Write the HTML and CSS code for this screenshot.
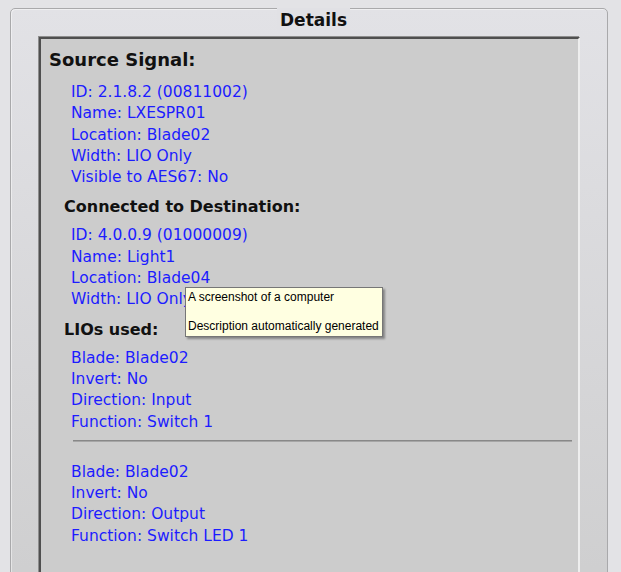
FILE: index.html
```html
<!DOCTYPE html>
<html lang="en">
<head>
  <meta charset="UTF-8">
  <meta name="viewport" content="width=device-width, initial-scale=1.0">
  <title>Details</title>
  <link rel="stylesheet" href="styles.css">
</head>
<body>
  <!-- Details group box -->
  <div class="group">
    <div class="group-title">Details</div>

    <div class="panel">
      <h2 class="heading">Source Signal:</h2>
      <ul class="props first">
        <li>ID: 2.1.8.2 (00811002)</li>
        <li>Name: LXESPR01</li>
        <li>Location: Blade02</li>
        <li>Width: LIO Only</li>
        <li>Visible to AES67: No</li>
      </ul>

      <h3 class="subheading">Connected to Destination:</h3>
      <ul class="props">
        <li>ID: 4.0.0.9 (01000009)</li>
        <li>Name: Light1</li>
        <li>Location: Blade04</li>
        <li>Width: LIO Only</li>
      </ul>

      <h3 class="subheading">LIOs used:</h3>
      <ul class="props">
        <li>Blade: Blade02</li>
        <li>Invert: No</li>
        <li>Direction: Input</li>
        <li>Function: Switch 1</li>
      </ul>
      <hr class="divider">
      <ul class="props lio-next">
        <li>Blade: Blade02</li>
        <li>Invert: No</li>
        <li>Direction: Output</li>
        <li>Function: Switch LED 1</li>
      </ul>
    </div>
  </div>

  <!-- Hover tooltip -->
  <div class="tooltip">A screenshot of a computer<br><br>Description automatically generated</div>
</body>
</html>
```

FILE: styles.css
```css
* {
  margin: 0;
  padding: 0;
  box-sizing: border-box;
}

html,
body {
  height: 572px;
  overflow: hidden;
}

body {
  background: #e3e3e6;
  font-family: 'DejaVu Sans', sans-serif;
  position: relative;
}

.group {
  display: flex;
  flex-direction: column;
  height: 620px;
  margin: 8px 13px 0 10px;
  padding: 0 27px 0 28px;
  border: 1px solid #a9a9ab;
  border-radius: 5px;
  box-shadow: inset 1px 1px 0 rgba(255, 255, 255, 0.45);
  background: linear-gradient(#e2e2e6, #cfcfd0 560px);
}

.group-title {
  align-self: center;
  margin: -1px 0 0 8px;
  padding: 1px 3px 0;
  font-size: 17px;
  font-weight: bold;
  line-height: 22px;
  color: #111;
  background: #e1e1e5;
}

.panel {
  flex: 1;
  margin-top: 6px;
  padding: 10px 0 0 8px;
  background: #cccccc;
  border-top: 2px solid #4f4f4f;
  border-left: 2px solid #4f4f4f;
  border-right: 2px solid #eeeeee;
  box-shadow: -1px -1px 0 #8e8e8e;
}

.heading {
  font-size: 18px;
  font-weight: bold;
  line-height: 22px;
  color: #111;
}

.subheading {
  margin: 8px 0 0 15px;
  font-size: 16px;
  font-weight: bold;
  line-height: 22px;
  color: #111;
}

.props {
  list-style: none;
  margin: 7px 0 0 22px;
  font-size: 15.5px;
  line-height: 21.3px;
  color: #1c1cff;
}

.props.first {
  margin-top: 11px;
}

.divider {
  height: 2px;
  margin: 7px 6px 0 24px;
  border: none;
  border-top: 1px solid #888888;
  border-bottom: 1px solid #a6a6a6;
}

.props.lio-next {
  margin-top: 20px;
}

.tooltip {
  position: absolute;
  left: 185px;
  top: 287px;
  padding: 2px 3px 2px 2px;
  font-family: 'Liberation Sans', Arial, sans-serif;
  font-size: 12px;
  line-height: 14.6px;
  white-space: nowrap;
  color: #000;
  background: #ffffe1;
  border: 1px solid #767676;
  box-shadow: 2px 2px 2px rgba(0, 0, 0, 0.35);
}
```
